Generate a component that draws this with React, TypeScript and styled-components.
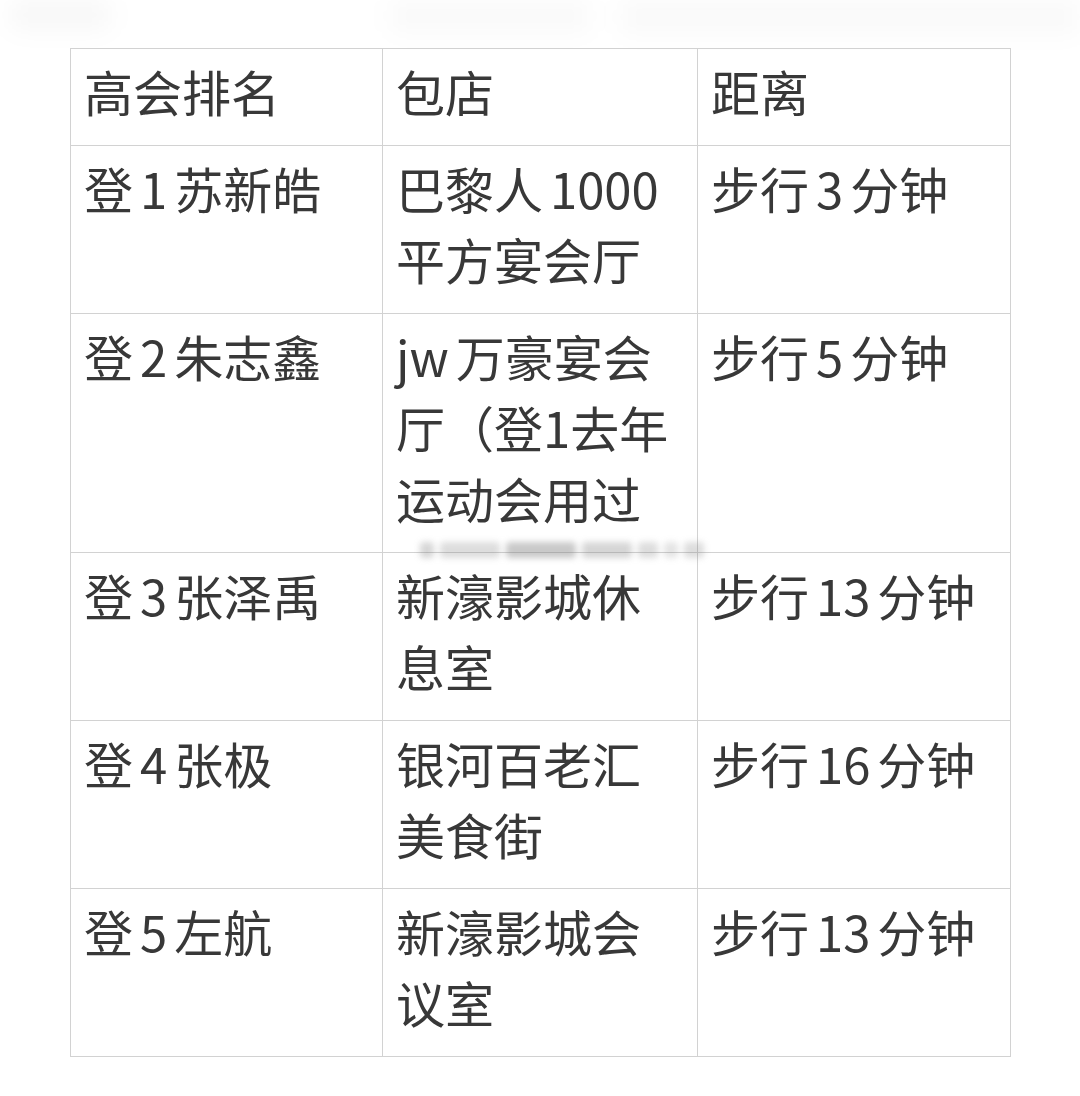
import styled, { createGlobalStyle } from 'styled-components';

const GlobalStyle = createGlobalStyle`
  html, body {
    margin: 0;
    padding: 0;
    background: #ffffff;
  }
  body {
    font-family: "Noto Sans CJK SC", "Noto Sans", sans-serif;
    color: #3a3a3a;
  }
`;

const Page = styled.div`
  width: 1080px;
  height: 1096px;
  overflow: hidden;
  background: #ffffff;
`;

const FadedTop = styled.div`
  height: 48px;
  display: flex;
  justify-content: space-between;
  padding: 0 0 0 10px;
  box-sizing: border-box;
`;

const Smudge = styled.div<{ $w: number; $h: number; $o: number }>`
  width: ${(p) => p.$w}px;
  height: ${(p) => p.$h}px;
  background: rgba(0, 0, 0, ${(p) => p.$o});
  filter: blur(12px);
  border-radius: 8px;
`;

const SmudgeGroup = styled.div`
  display: flex;
  gap: 30px;
`;

const TableWrap = styled.div`
  position: relative;
  margin-left: 70px;
  width: 940px;
`;

const Table = styled.table`
  border-collapse: collapse;
  table-layout: fixed;
  width: 940px;
  font-size: 49px;
  line-height: 71px;
  word-spacing: -4px;
  color: #383838;
`;

const Col = styled.col<{ $w: number }>`
  width: ${(p) => p.$w}px;
`;

const Cell = styled.td`
  border: 1px solid #d2d2d2;
  padding: 6px 12px 19px 13px;
  vertical-align: top;
  font-weight: 400;
  white-space: nowrap;
`;

const Watermark = styled.div`
  position: absolute;
  left: 350px;
  top: 494px;
  display: flex;
  align-items: center;
  gap: 6px;
  filter: blur(3px);
  pointer-events: none;
`;

const MarkBit = styled.span<{ $w: number; $o: number }>`
  display: block;
  width: ${(p) => p.$w}px;
  height: 16px;
  border-radius: 4px;
  background: rgba(120, 120, 120, ${(p) => p.$o});
`;

type Row = { rank: string; room: string[]; dist: string };

const header = { rank: '高会排名', room: ['包店'], dist: '距离' };

const rows: Row[] = [
  { rank: '登 1 苏新皓', room: ['巴黎人 1000', '平方宴会厅'], dist: '步行 3 分钟' },
  { rank: '登 2 朱志鑫', room: ['jw 万豪宴会', '厅（登1去年', '运动会用过'], dist: '步行 5 分钟' },
  { rank: '登 3 张泽禹', room: ['新濠影城休', '息室'], dist: '步行 13 分钟' },
  { rank: '登 4 张极', room: ['银河百老汇', '美食街'], dist: '步行 16 分钟' },
  { rank: '登 5 左航', room: ['新濠影城会', '议室'], dist: '步行 13 分钟' },
];

const Lines = ({ lines }: { lines: string[] }) => (
  <>
    {lines.map((l, i) => (
      <div key={i}>{l}</div>
    ))}
  </>
);

export default function App() {
  return (
    <Page>
      <GlobalStyle />
      <FadedTop>
        <Smudge $w={100} $h={30} $o={0.03} />
        <SmudgeGroup>
          <Smudge $w={200} $h={32} $o={0.025} />
          <Smudge $w={460} $h={34} $o={0.025} />
        </SmudgeGroup>
      </FadedTop>
      <TableWrap>
        <Table>
          <colgroup>
            <Col $w={312} />
            <Col $w={315} />
            <Col $w={313} />
          </colgroup>
          <tbody>
            <tr>
              <Cell>{header.rank}</Cell>
              <Cell>
                <Lines lines={header.room} />
              </Cell>
              <Cell>{header.dist}</Cell>
            </tr>
            {rows.map((r) => (
              <tr key={r.rank}>
                <Cell>{r.rank}</Cell>
                <Cell>
                  <Lines lines={r.room} />
                </Cell>
                <Cell>{r.dist}</Cell>
              </tr>
            ))}
          </tbody>
        </Table>
        <Watermark>
          <MarkBit $w={14} $o={0.3} />
          <MarkBit $w={60} $o={0.25} />
          <MarkBit $w={70} $o={0.4} />
          <MarkBit $w={50} $o={0.3} />
          <MarkBit $w={20} $o={0.25} />
          <MarkBit $w={14} $o={0.2} />
          <MarkBit $w={20} $o={0.25} />
        </Watermark>
      </TableWrap>
    </Page>
  );
}
